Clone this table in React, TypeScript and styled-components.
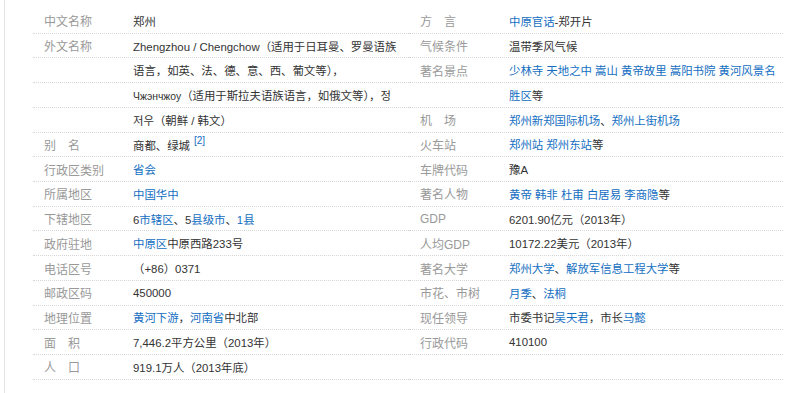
import React from "react";
import styled, { createGlobalStyle } from "styled-components";

const Global = createGlobalStyle`
  html, body { margin: 0; padding: 0; background: #fff; }
  body {
    font-family: "Liberation Sans", Arial, "Noto Sans CJK SC", sans-serif;
    font-size: 12px;
    color: #333;
  }
`;

const Card = styled.div`
  margin-left: 4px;
  border-left: 1px solid #e4e4e4;
  height: 393px;
  box-sizing: border-box;
  padding: 9px 0 0 28px;
  display: grid;
  grid-template-columns: 376px 374px;
  align-content: start;
`;

const Column = styled.dl`
  margin: 0;
  display: flex;
  flex-direction: column;
`;

const Row = styled.div`
  display: flex;
  align-items: center;
  height: 24.72px;
  box-sizing: border-box;
  border-bottom: 1px dotted #d6d6d6;
  padding-left: 11px;
  white-space: nowrap;
`;

const Label = styled.dt`
  width: 89px;
  flex: none;
  color: #999;
  font-size: 12px;
  margin: 0;
`;

const Value = styled.dd`
  margin: 0;
  color: #333;
  font-size: 11.4px;
`;

const Link = styled.a`
  color: #136ec2;
  text-decoration: none;
`;

const Cyrillic = styled.span`
  font-size: 10.4px;
`;

const Sup = styled.sup`
  color: #136ec2;
  font-size: 10px;
  margin-left: 4px;
  position: relative;
  top: -1px;
`;

type Item = { label?: string; value: React.ReactNode };

const leftItems: Item[] = [
  { label: "中文名称", value: "郑州" },
  { label: "外文名称", value: "Zhengzhou / Chengchow（适用于日耳曼、罗曼语族" },
  { value: "语言，如英、法、德、意、西、葡文等），" },
  {
    value: (
      <>
        <Cyrillic>Чжэнчжоу</Cyrillic>（适用于斯拉夫语族语言，如俄文等），정
      </>
    ),
  },
  { value: "저우（朝鲜 / 韩文）" },
  {
    label: "别\u3000名",
    value: (
      <>
        商都、绿城<Sup>[2]</Sup>
      </>
    ),
  },
  { label: "行政区类别", value: <Link>省会</Link> },
  { label: "所属地区", value: <Link>中国华中</Link> },
  {
    label: "下辖地区",
    value: (
      <>
        6<Link>市辖区</Link>、5<Link>县级市</Link>、<Link>1县</Link>
      </>
    ),
  },
  {
    label: "政府驻地",
    value: (
      <>
        <Link>中原区</Link>中原西路233号
      </>
    ),
  },
  { label: "电话区号", value: "（+86）0371" },
  { label: "邮政区码", value: "450000" },
  {
    label: "地理位置",
    value: (
      <>
        <Link>黄河下游</Link>，<Link>河南省</Link>中北部
      </>
    ),
  },
  { label: "面\u3000积", value: "7,446.2平方公里（2013年）" },
  { label: "人\u3000口", value: "919.1万人（2013年底）" },
];

const rightItems: Item[] = [
  {
    label: "方\u3000言",
    value: (
      <>
        <Link>中原官话</Link>-郑开片
      </>
    ),
  },
  { label: "气候条件", value: "温带季风气候" },
  {
    label: "著名景点",
    value: (
      <>
        <Link>少林寺</Link> <Link>天地之中</Link> <Link>嵩山</Link>{" "}
        <Link>黄帝故里</Link> <Link>嵩阳书院</Link> <Link>黄河风景名</Link>
      </>
    ),
  },
  {
    value: (
      <>
        <Link>胜区</Link>等
      </>
    ),
  },
  {
    label: "机\u3000场",
    value: (
      <>
        <Link>郑州新郑国际机场</Link>、<Link>郑州上街机场</Link>
      </>
    ),
  },
  {
    label: "火车站",
    value: (
      <>
        <Link>郑州站</Link> <Link>郑州东站</Link>等
      </>
    ),
  },
  { label: "车牌代码", value: "豫A" },
  {
    label: "著名人物",
    value: (
      <>
        <Link>黄帝</Link> <Link>韩非</Link> <Link>杜甫</Link>{" "}
        <Link>白居易</Link> <Link>李商隐</Link>等
      </>
    ),
  },
  { label: "GDP", value: "6201.90亿元（2013年）" },
  { label: "人均GDP", value: "10172.22美元（2013年）" },
  {
    label: "著名大学",
    value: (
      <>
        <Link>郑州大学</Link>、<Link>解放军信息工程大学</Link>等
      </>
    ),
  },
  {
    label: "市花、市树",
    value: (
      <>
        <Link>月季</Link>、<Link>法桐</Link>
      </>
    ),
  },
  {
    label: "现任领导",
    value: (
      <>
        市委书记<Link>吴天君</Link>，市长<Link>马懿</Link>
      </>
    ),
  },
  { label: "行政代码", value: "410100" },
  { value: "" },
];

function InfoColumn({ items }: { items: Item[] }) {
  return (
    <Column>
      {items.map((it, i) => (
        <Row key={i}>
          <Label>{it.label ?? ""}</Label>
          <Value>{it.value}</Value>
        </Row>
      ))}
    </Column>
  );
}

export default function App() {
  return (
    <>
      <Global />
      <Card>
        <InfoColumn items={leftItems} />
        <InfoColumn items={rightItems} />
      </Card>
    </>
  );
}
